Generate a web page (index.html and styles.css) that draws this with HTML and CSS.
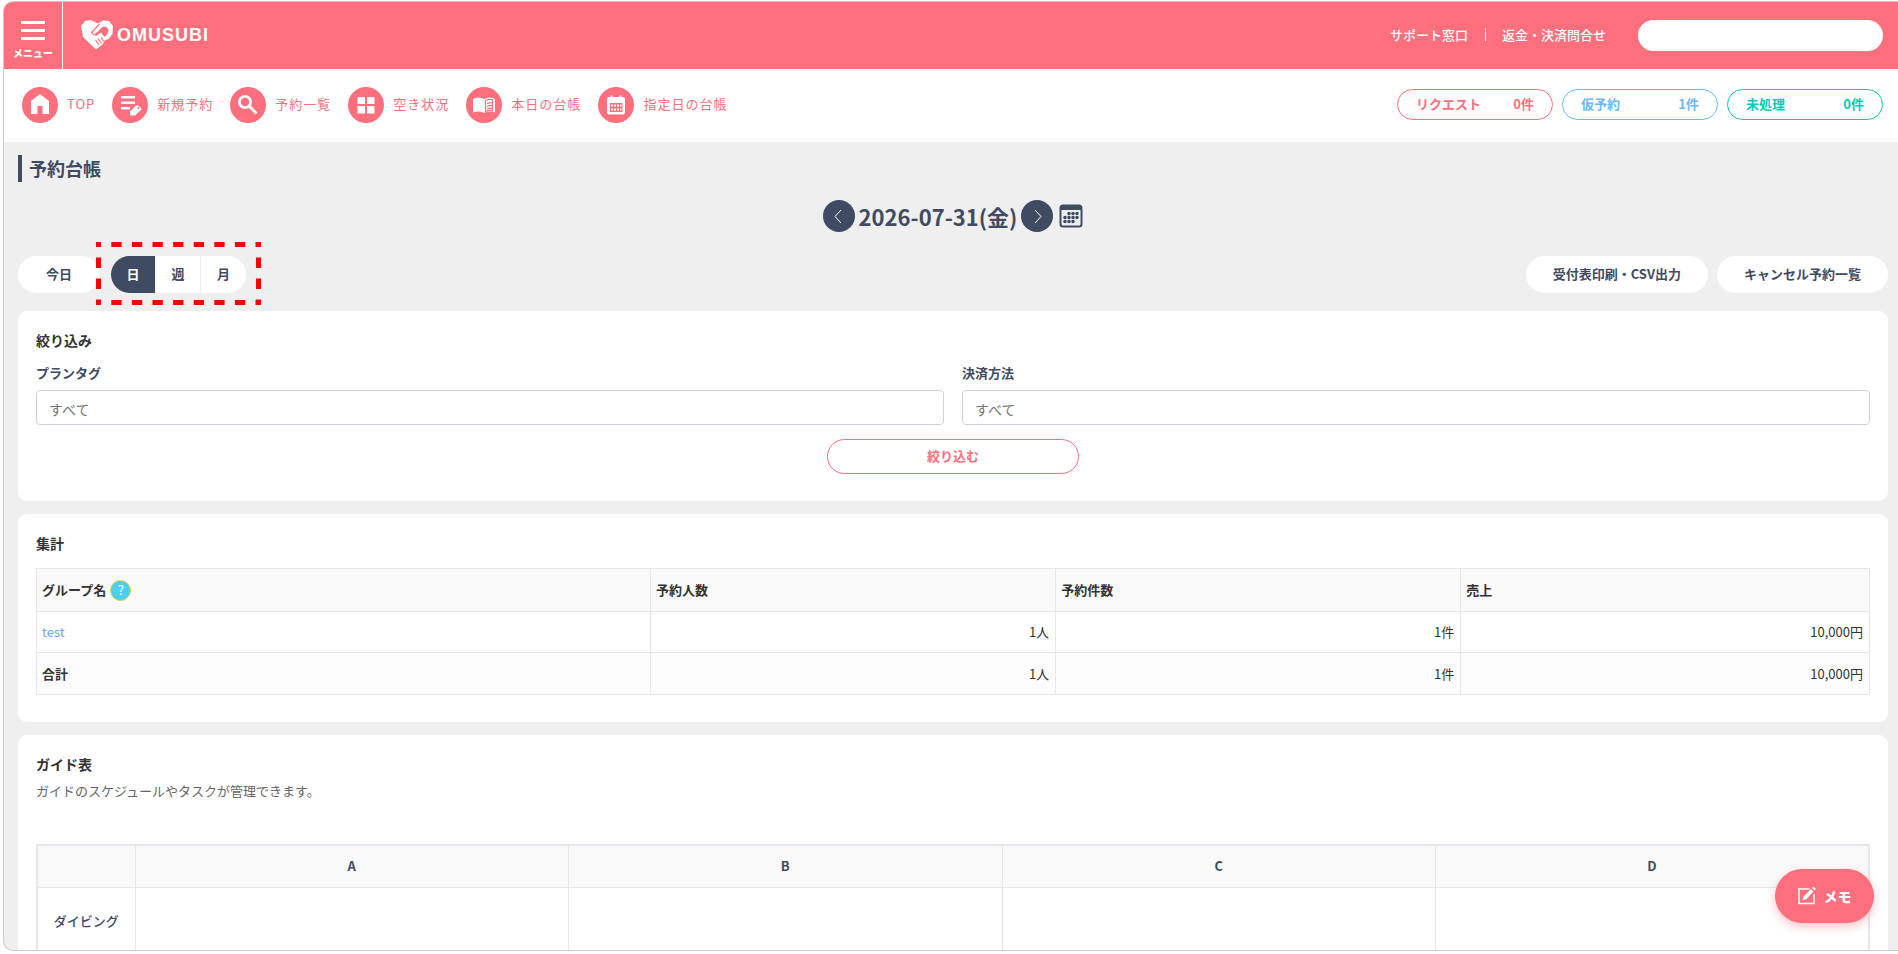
FILE: index.html
```html
<!DOCTYPE html>
<html lang="ja">
<head>
    <meta charset="UTF-8">
    <meta name="viewport" content="width=device-width, initial-scale=1.0">
    <title>予約台帳 | OMUSUBI</title>
    <link rel="stylesheet" href="styles.css">
</head>
<body>
<div class="frame">
    <header class="header">
        <button type="button" class="menuBtn">
            <svg width="24" height="19" viewBox="0 0 24 19" fill="#fff" aria-hidden="true">
                <path d="M0 0h24v3H0zM0 8h24v3H0zM0 16h24v3H0z"/>
            </svg>
            <span>メニュー</span>
        </button>
        <a href="#" class="logo">
            <svg width="32" height="30" viewBox="0 0 32 30" aria-hidden="true">
                <path fill="#fff" d="M4 1 10 0l7 3.500L22 .5l6 .5 4 5-.5 8-4 5-4 1.500-1.500 3.500-7 5.500L2 17 0 6z"/>
                <path fill="#fd6f7c" d="M17.500 11q3-4.500 6.500-4.500 3.500 1 3.500 4.500-.5 3.500-4 6l-3.500-4.500-5 3.500-2-1.500z"/>
                <path fill="none" stroke="#fd6f7c" stroke-width="1.200" d="m18.500 4-8 8.500 2.500 2.500M14.500 20l3.500 5M17 18.500l3.500 5M20 17.500l3 4"/>
            </svg>
            <span>OMUSUBI</span>
        </a>
        <nav class="headerLinks">
            <a href="#">サポート窓口</a>
            <a href="#">返金・決済問合せ</a>
        </nav>
        <input type="text" class="accountBox" aria-label="アカウント">
    </header>

    <div class="subHeader">
        <nav class="mainNav">
            <a href="#">
                <svg class="navIcon" viewBox="0 0 36 36" aria-hidden="true">
                    <circle cx="18" cy="18" r="18"/>
                    <path fill="#fff" d="m18 7 9 7v13h-6.500v-8h-5v8H9V14z"/>
                </svg>
                <span>TOP</span>
            </a>
            <a href="#">
                <svg class="navIcon" viewBox="0 0 36 36" aria-hidden="true">
                    <circle cx="18" cy="18" r="18"/>
                    <path fill="#fff" d="M9 9h14v2.500H9zM9 14.500h14V17H9zM9 20h9v2.500H9zM18 28.500v-4l6-6q1-1 2 0l3 2.500q1 1 0 2l-6 5.500z"/>
                    <circle cx="26.500" cy="21" r="1"/>
                </svg>
                <span>新規予約</span>
            </a>
            <a href="#">
                <svg class="navIcon" viewBox="0 0 36 36" aria-hidden="true">
                    <circle cx="18" cy="18" r="18"/>
                    <g fill="none" stroke="#fff" stroke-width="2.800">
                        <circle class="lens" cx="15" cy="15" r="5.600"/>
                        <path d="m19 19 7.500 7.500"/>
                    </g>
                </svg>
                <span>予約一覧</span>
            </a>
            <a href="#">
                <svg class="navIcon" viewBox="0 0 36 36" aria-hidden="true">
                    <circle cx="18" cy="18" r="18"/>
                    <path fill="#fff" d="M9.500 10H17v7H9.500zM19 10h7.500v7H19zM9.500 19H17v7.500H9.500zM19 19h7.500v7.500H19z"/>
                </svg>
                <span>空き状況</span>
            </a>
            <a href="#">
                <svg class="navIcon" viewBox="0 0 36 36" aria-hidden="true">
                    <circle cx="18" cy="18" r="18"/>
                    <path fill="#fff" d="M7 12q5.500-3 11 0 5.500-3 11 0v13.500q-5.500-2-11 .5-5.500-2.500-11-.5z"/>
                    <path fill="none" stroke="#fd6f7c" stroke-width="1.200" d="M19.500 13.500q3-1.500 7-1v11q-4-.5-7 1zM21 16.500q2-1 5-.5M21 19.200q2-1 5-.5M21 22q2-1 5-.5"/>
                </svg>
                <span>本日の台帳</span>
            </a>
            <a href="#">
                <svg class="navIcon" viewBox="0 0 36 36" aria-hidden="true">
                    <circle cx="18" cy="18" r="18"/>
                    <path fill="#fff" d="M12.500 8.500h2V10h7V8.500h2V10H25q2 0 2 2v13.500q0 2-2 2H11q-2 0-2-2V12q0-2 2-2h1.500z"/>
                    <path d="M12 16h12.500v9H12z"/>
                    <path fill="#fff" d="M13 17.500h2v2h-2zM16 17.500h2v2h-2zM19 17.500h2v2h-2zM22 17.500h1.500v2H22zM13 21.500h2v2h-2zM16 21.500h2v2h-2zM19 21.500h2v2h-2zM22 21.500h1.500v2H22z"/>
                </svg>
                <span>指定日の台帳</span>
            </a>
        </nav>
        <div class="badges">
            <a href="#" class="badge request"><span>リクエスト</span><span>0件</span></a>
            <a href="#" class="badge tentative"><span>仮予約</span><span>1件</span></a>
            <a href="#" class="badge pending"><span>未処理</span><span>0件</span></a>
        </div>
    </div>

    <main class="main">
        <h1 class="pageTitle">予約台帳</h1>

        <div class="dateRow">
            <button type="button" class="arrowBtn" aria-label="前日">
                <svg width="32" height="32" viewBox="0 0 32 32" fill="none" stroke="#fff"><path d="m18 10-6 6.500 6 6.500"/></svg>
            </button>
            <h2 class="dateText">2026-07-31(金)</h2>
            <button type="button" class="arrowBtn" aria-label="翌日">
                <svg width="32" height="32" viewBox="0 0 32 32" fill="none" stroke="#fff"><path d="m14 10 6 6.500-6 6.500"/></svg>
            </button>
            <button type="button" class="calendarBtn" aria-label="カレンダー">
                <svg width="24" height="24" viewBox="0 0 24 24">
                    <rect x="1.500" y="1.500" width="21" height="21" rx="2.500" fill="none" stroke="#3f4b63" stroke-width="2"/>
                    <path fill="#3f4b63" d="M2 1h20v5H2z"/>
                    <path fill="none" stroke="#3f4b63" stroke-width="3.600" stroke-linecap="round" stroke-dasharray="0 4" d="M10 9.500h8.500M6 13.500h12.500M6 17.500h8.500"/>
                </svg>
            </button>
        </div>

        <div class="toolbar">
            <button type="button" class="pillBtn">今日</button>
            <div class="viewSwitch">
                <button type="button" class="active">日</button>
                <button type="button">週</button>
                <button type="button">月</button>
                <svg class="highlight" viewBox="0 0 165 63" fill="none" stroke="#f00" stroke-width="5" aria-hidden="true">
                    <path stroke-dasharray="10.300" stroke-dashoffset="5.300" d="M0 2.500h165M0 60.500h165"/>
                    <path stroke-dasharray="10.500" stroke-dashoffset="5.500" d="M2.500 0v63M162.500 0v63"/>
                </svg>
            </div>
            <div class="toolbarRight">
                <button type="button" class="pillBtn">受付表印刷・CSV出力</button>
                <button type="button" class="pillBtn">キャンセル予約一覧</button>
            </div>
        </div>

        <section class="card">
            <h3>絞り込み</h3>
            <form class="filterForm">
                <div class="field">
                    <label for="planTag">プランタグ</label>
                    <input type="text" id="planTag" placeholder="すべて">
                </div>
                <div class="field">
                    <label for="payment">決済方法</label>
                    <input type="text" id="payment" placeholder="すべて">
                </div>
                <button type="button" class="filterBtn">絞り込む</button>
            </form>
        </section>

        <section class="card">
            <h3>集計</h3>
            <table class="summary">
                <thead>
                <tr>
                    <th class="groupCol"><span class="groupHead">グループ名 <button type="button" class="helpBtn">?</button></span></th>
                    <th class="countCol">予約人数</th>
                    <th class="countCol">予約件数</th>
                    <th>売上</th>
                </tr>
                </thead>
                <tbody>
                <tr>
                    <td><a href="#">test</a></td>
                    <td>1人</td>
                    <td>1件</td>
                    <td>10,000円</td>
                </tr>
                <tr class="total">
                    <th>合計</th>
                    <td>1人</td>
                    <td>1件</td>
                    <td>10,000円</td>
                </tr>
                </tbody>
            </table>
        </section>

        <section class="card">
            <h3>ガイド表</h3>
            <p class="description">ガイドのスケジュールやタスクが管理できます。</p>
            <table class="guide">
                <thead>
                <tr>
                    <th class="nameCol"></th>
                    <th>A</th>
                    <th>B</th>
                    <th>C</th>
                    <th>D</th>
                </tr>
                </thead>
                <tbody>
                <tr>
                    <td>ダイビング</td>
                    <td></td>
                    <td></td>
                    <td></td>
                    <td></td>
                </tr>
                </tbody>
            </table>
        </section>
    </main>
</div>

<button type="button" class="memoBtn">
    <svg width="18" height="18" viewBox="0 0 18 18" aria-hidden="true">
        <path fill="none" stroke="#fff" stroke-width="1.500" d="M11.500 2H1v14.500h15V7"/>
        <path fill="#fff" d="m4.500 13.500 1-4 7.500-7.500 2.500 2.500L8.500 12zM14 1l1-1q.5-.5 1 0l1.500 1.500q.5.5 0 1l-1 1z"/>
    </svg>
    メモ
</button>
</body>
</html>
```

FILE: styles.css
```css
* {
    box-sizing: border-box;
}

body {
    margin: 0;
    height: 100vh;
    overflow: hidden;
    padding: 1px 0 3px 3px;
    background-color: #fff;
    color: #333;
    font-family: "Noto Sans CJK JP", "Noto Sans", sans-serif;
    font-size: 13px;
    line-height: 20px;
}

a {
    color: inherit;
    text-decoration: none;
}

button,
input {
    font-family: inherit;
    font-size: 13px;
    line-height: 20px;
}

button {
    border: none;
    padding: 0;
    cursor: pointer;
}

h1,
h2,
h3,
p {
    margin: 0;
}

/* Rounded window around the whole page */
.frame {
    height: 100%;
    overflow: hidden;
    border: 1px solid #ccc;
    border-right: none;
    border-radius: 10px 0 0 10px;
    background-color: #efefef;
}

/* Pink header */
.header {
    display: flex;
    align-items: center;
    height: 67px;
    padding-right: 15px;
    background-color: #fd6f7c;
    color: #fff;
}

.menuBtn {
    display: flex;
    flex-direction: column;
    align-items: center;
    justify-content: center;
    gap: 5px;
    width: 59px;
    height: 100%;
    padding-top: 10px;
    border-right: 1px solid #fff;
    background: none;
    color: #fff;
    font-size: 10px;
    font-weight: 900;
    line-height: 16px;
}

.logo {
    display: flex;
    align-items: center;
    gap: 4px;
    margin-left: 18px;
    padding-bottom: 2px;
    font-family: "Liberation Sans", Arial, sans-serif;
    font-size: 18px;
    font-weight: bold;
    letter-spacing: 1px;
}

.headerLinks {
    display: flex;
    align-items: center;
    margin-left: auto;
    padding-bottom: 2px;
    font-weight: 500;
}

.headerLinks a + a {
    margin-left: 17px;
    padding-left: 16px;
    border-left: 1px solid #fff;
    line-height: 13px;
}

.accountBox {
    width: 245px;
    height: 31px;
    margin-left: 32px;
    padding: 0 16px;
    border: none;
    border-radius: 16px;
    background-color: #fff;
}

/* Shortcut navigation */
.subHeader {
    display: flex;
    align-items: center;
    justify-content: space-between;
    height: 73px;
    padding: 0 15px 2px 18px;
    background-color: #fff;
    color: #fd6f7c;
}

.mainNav {
    display: flex;
    gap: 17px;
    letter-spacing: 1px;
}

.mainNav a {
    display: flex;
    align-items: center;
    gap: 9px;
}

.mainNav span,
.badge span {
    padding-bottom: 2px;
}

.navIcon {
    width: 36px;
    height: 36px;
    fill: #fd6f7c;
}

.navIcon .lens {
    fill: none;
}

.badges {
    display: flex;
    gap: 9px;
}

.badge {
    display: flex;
    align-items: center;
    justify-content: space-between;
    width: 156px;
    height: 31px;
    padding: 0 18px;
    border: 1px solid;
    border-radius: 16px;
    font-weight: bold;
}

.request {
    color: #fd6f7c;
}

.tentative {
    color: #6cb8fb;
}

.pending {
    color: #0bcab8;
}

/* Content */
.main {
    padding: 13px 10px 0 14px;
}

.pageTitle {
    padding-left: 7px;
    border-left: 4px solid #3f4b63;
    color: #3f4b63;
    font-size: 18px;
    line-height: 27px;
}

.dateRow {
    display: flex;
    align-items: center;
    justify-content: center;
    gap: 4px;
    margin-top: 18px;
}

.dateText {
    color: #3f4b63;
    font-size: 22px;
    line-height: 32px;
}

.arrowBtn {
    width: 32px;
    height: 32px;
    border-radius: 50%;
    background-color: #3f4b63;
}

.calendarBtn {
    height: 24px;
    margin-left: 2px;
    background: none;
}

.toolbar {
    display: flex;
    gap: 11px;
    margin-top: 24px;
}

.pillBtn {
    min-width: 82px;
    height: 37px;
    padding: 0 27px 2px;
    border-radius: 19px;
    background-color: #fff;
    color: #3f4b63;
    font-weight: bold;
}

.viewSwitch {
    display: flex;
    position: relative;
}

.viewSwitch button {
    width: 45px;
    height: 37px;
    padding-bottom: 2px;
    border-right: 1px solid #efefef;
    background-color: #fff;
    color: #3f4b63;
    font-weight: bold;
}

.viewSwitch button:first-child {
    border-radius: 19px 0 0 19px;
}

.viewSwitch button:nth-child(3) {
    border-right: none;
    border-radius: 0 19px 19px 0;
}

.viewSwitch .active {
    background-color: #3f4b63;
    color: #fff;
}

/* Red dashed marker over the day / week / month switch */
.highlight {
    position: absolute;
    top: -14px;
    left: -15px;
    width: 165px;
    height: 63px;
    pointer-events: none;
}

.toolbarRight {
    display: flex;
    gap: 9px;
    margin-left: auto;
}

.card {
    margin-top: 13px;
    padding: 18px 18px 27px;
    border-radius: 9px;
    background-color: #fff;
}

.toolbar + .card {
    margin-top: 18px;
}

.card h3 {
    padding-bottom: 2px;
    font-size: 14px;
    line-height: 22px;
}

.filterForm {
    display: grid;
    grid-template-columns: 1fr 1fr;
    gap: 14px 18px;
    margin-top: 10px;
}

.field label {
    display: block;
    margin-bottom: 7px;
    color: #3f4b63;
    font-weight: bold;
}

.field input {
    display: block;
    width: 100%;
    height: 35px;
    padding: 3px 12px 0;
    border: 1px solid #ccd3de;
    border-radius: 4px;
    font-size: 14px;
}

.field input::placeholder {
    color: #757575;
}

.filterBtn {
    grid-column: 1 / -1;
    justify-self: center;
    width: 252px;
    height: 35px;
    padding-bottom: 2px;
    border: 1px solid #fd6f7c;
    border-radius: 18px;
    background-color: #fff;
    color: #fd6f7c;
    font-weight: bold;
}

/* Tables */
table {
    width: 100%;
    border-collapse: collapse;
    table-layout: fixed;
}

th,
td {
    border: 1px solid #e6e6ec;
}

.summary {
    margin-top: 12px;
}

.summary th,
.summary td {
    height: 41px;
    padding: 0 6px 0 5px;
    text-align: right;
}

.summary th,
.summary td:first-child {
    text-align: left;
}

.summary thead th {
    height: 43px;
    background-color: #f9f9f9;
}

.summary .total td {
    height: 42px;
}

.summary .groupCol {
    width: 33.5%;
}

.summary .countCol {
    width: 22.1%;
}

.groupHead {
    display: flex;
    align-items: center;
    gap: 4px;
}

.summary .total {
    background-color: #fcfcfc;
}

.summary a {
    color: #6ba6ff;
}

.helpBtn {
    width: 21px;
    height: 21px;
    border: 1px solid #e2d73c;
    border-radius: 50%;
    background-color: #4bcff5;
    color: #fff;
    line-height: 18px;
}

.description {
    margin-top: 4px;
    color: #666;
}

.guide {
    margin-top: 43px;
    border: 2px solid #e6e6ec;
    color: #3f4b63;
}

.guide th {
    height: 42px;
    padding: 0;
    background-color: #f9f9f9;
}

.guide td {
    height: 68px;
    padding: 0;
    text-align: center;
    font-weight: 500;
}

.guide .nameCol {
    width: 98px;
}

/* Floating memo button */
.memoBtn {
    display: flex;
    align-items: center;
    justify-content: center;
    gap: 8px;
    position: fixed;
    right: 24px;
    bottom: 31px;
    width: 99px;
    height: 54px;
    border-radius: 27px;
    background-color: #fd6f7c;
    box-shadow: 0 4px 10px rgba(253, 111, 124, 0.4);
    color: #fff;
    font-size: 14px;
    font-weight: 900;
}
```
